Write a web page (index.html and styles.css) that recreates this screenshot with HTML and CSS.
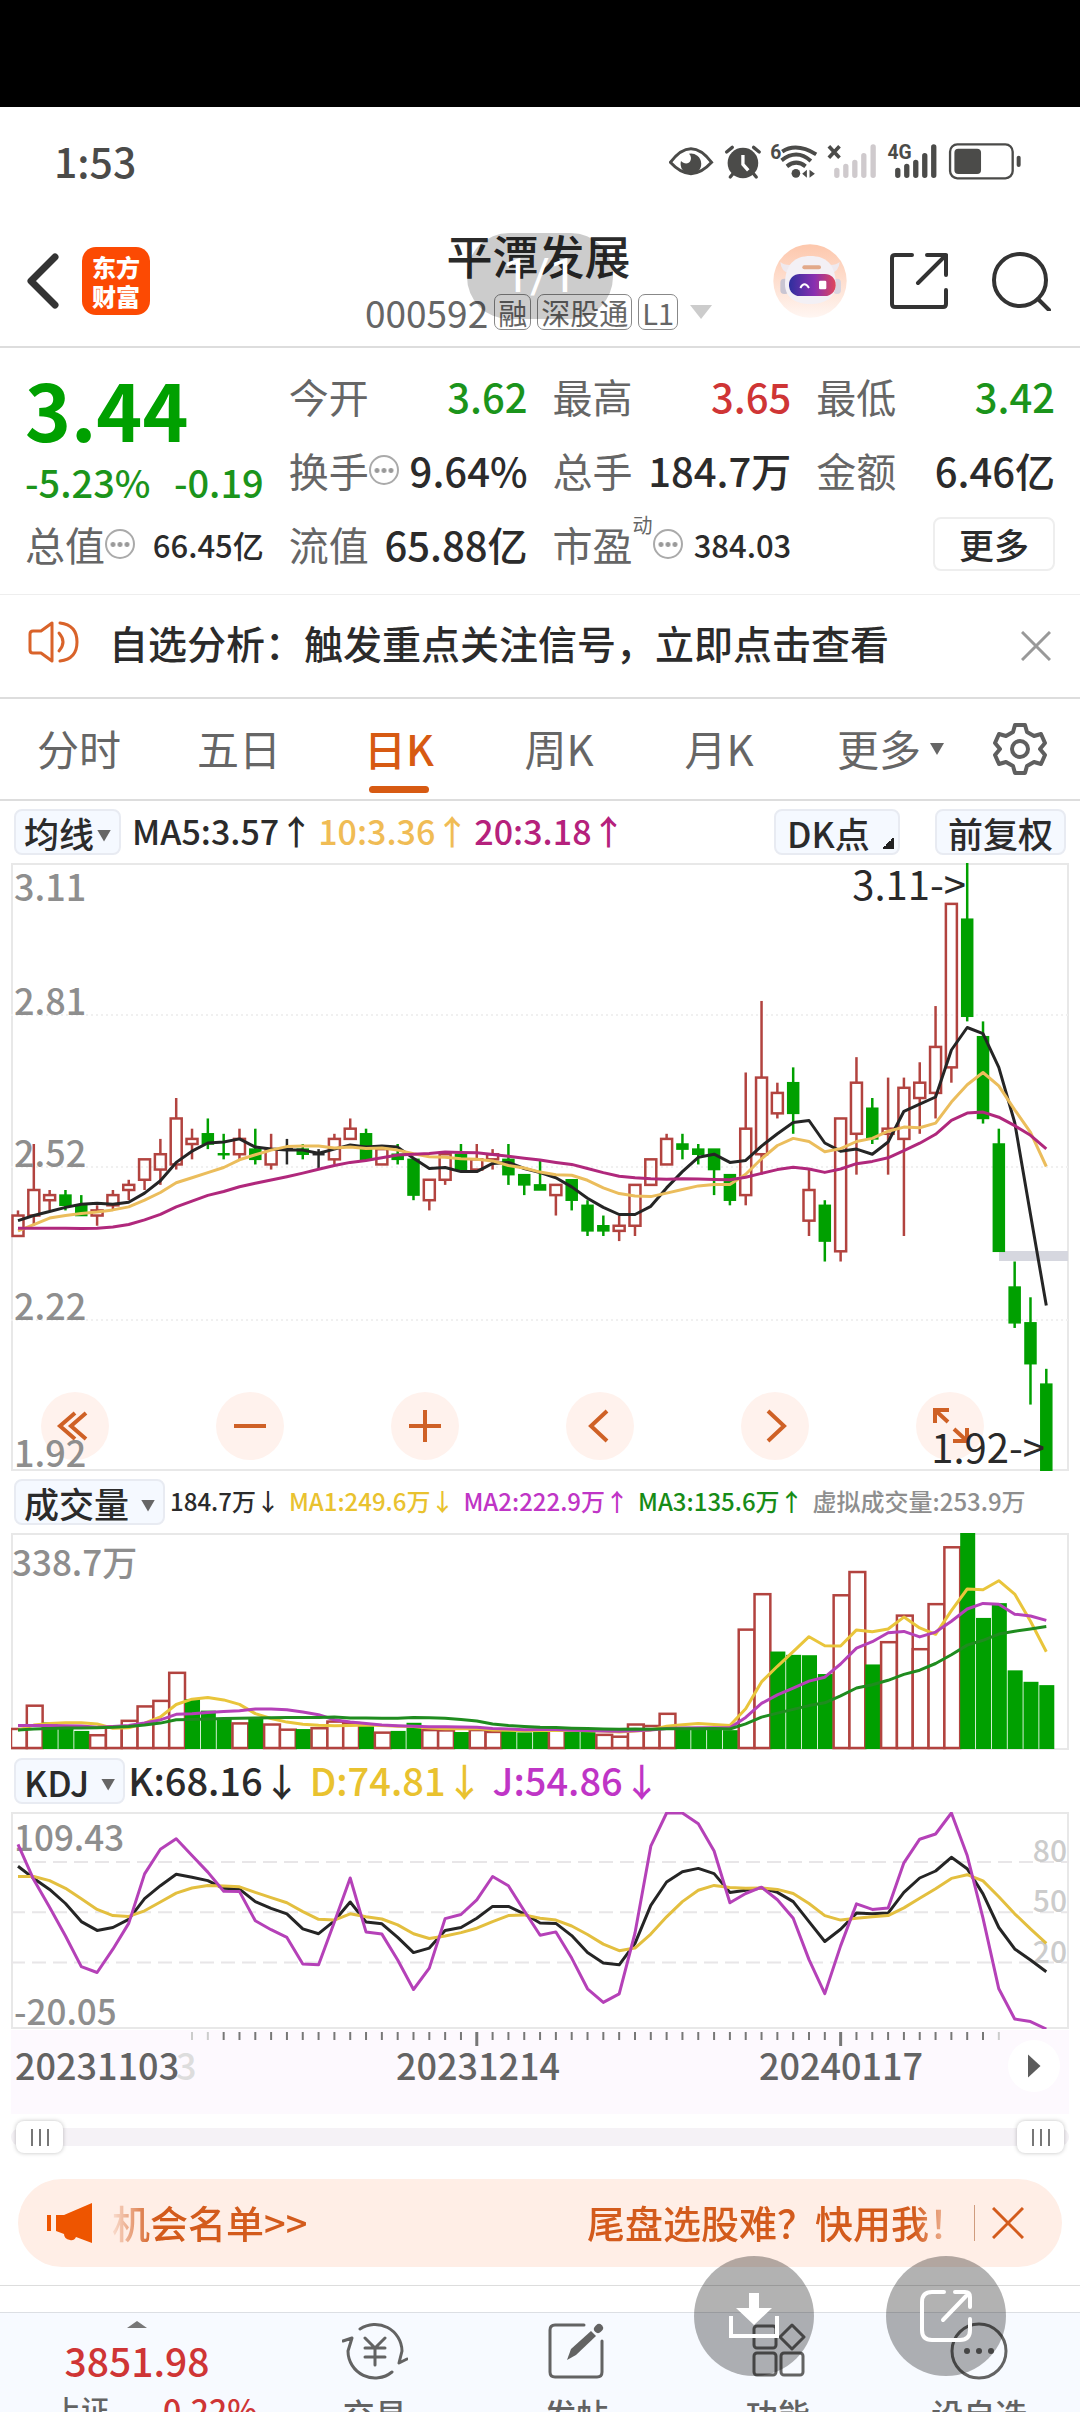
FILE: index.html
```html
<!DOCTYPE html>
<html lang="zh-CN">
<head>
<meta charset="utf-8">
<meta name="viewport" content="width=device-width">
<title>平潭发展 000592</title>
<link rel="stylesheet" href="styles.css">
</head>
<body>
<div class="screen">
  <div class="cutout"></div>

  <div class="status">
    <span>1:53</span>
    <svg class="status-icons" viewBox="0 0 1060 120" fill="none">
      <path d="M4 64Q66-18 128 64Q66 132 4 64Z" stroke="#4b4b49" stroke-width="9"/>
      <path d="M60 38a31 31 0 1 1-24 22c8 10 24 10 28 0 4-8 2-16-4-22z" fill="#4b4b49"/>
      <g stroke="#4b4b49" stroke-width="10" stroke-linecap="round">
        <path d="M173 33l17-14M271 33l-17-14M184 108l10-12M262 108l-10-12"/>
      </g>
      <circle cx="222" cy="66" r="46" fill="#4b4b49"/>
      <path d="M222 42v28l16 18" stroke="#fff" stroke-width="10"/>
      <text x="304" y="54" class="status-net">6</text>
      <g stroke="#4b4b49" stroke-width="12">
        <path d="M340 32q42-28 102 8M338 58q46-36 88 2M354 76q28-22 56 0"/>
      </g>
      <circle cx="381" cy="97" r="13" fill="#4b4b49"/>
      <path d="M400 98l14-12v24zM422 86l16 12-16 12z" fill="#4b4b49"/>
      <path d="M480 16l32 34M512 16l-32 34" stroke="#4b4b49" stroke-width="11"/>
      <g stroke="#cfcacd" stroke-width="16" stroke-linecap="round">
        <path d="M504 88v15M531 76v27M558 64v39M585 44v59M613 18v85"/>
      </g>
      <g stroke="#4b4b49" stroke-width="16" stroke-linecap="round">
        <path d="M687 88v15M714 76v27M741 64v39M768 44v59M795 18v85"/>
      </g>
      <text x="656" y="54" class="status-net status-halo">4G</text>
      <rect x="844" y="10" width="188" height="102" rx="22" stroke="#4b4b49" stroke-width="7"/>
      <rect x="857" y="23" width="80" height="76" rx="12" fill="#4b4b49"/>
      <rect x="1044" y="44" width="12" height="34" rx="6" fill="#4b4b49"/>
    </svg>
  </div>

  <header class="header">
    <button class="icon-btn back" aria-label="返回">
      <svg width="34" height="60" viewBox="0 0 34 60" fill="none" stroke="#333" stroke-width="7" stroke-linecap="round" stroke-linejoin="round"><path d="M29 6L5 30l24 24"/></svg>
    </button>
    <a class="logo" href="#home">东方<br>财富</a>
    <div class="heading">
      <h1>平潭发展</h1>
      <div class="code">
        <span>000592</span><span class="tag">融</span><span class="tag">深股通</span><span class="tag">L1</span><i class="tri tri-lg"></i>
      </div>
    </div>
    <div class="actions">
      <button class="icon-btn" aria-label="智能助手">
        <svg width="74" height="74" viewBox="0 0 222 222">
          <defs>
            <linearGradient id="halo" x1="0" y1="0" x2="0" y2="1"><stop offset="0" stop-color="#fdc7ac"/><stop offset="1" stop-color="#fff6f2"/></linearGradient>
            <linearGradient id="visor" x1="0" y1="0" x2="1" y2="0"><stop offset="0" stop-color="#2e2f9e"/><stop offset=".55" stop-color="#8a2fb0"/><stop offset="1" stop-color="#e0475a"/></linearGradient>
          </defs>
          <circle cx="111" cy="111" r="110" fill="url(#halo)"/>
          <path d="M22 54q2 30 28 34l20-28q-32 8-48-6zM200 54q-2 30-28 34l-20-28q32 8 48-6z" fill="#efe9ee"/>
          <rect x="22" y="104" width="26" height="46" rx="12" fill="#c9c5d2"/>
          <rect x="180" y="104" width="24" height="46" rx="12" fill="#d9d5df"/>
          <path d="M36 120c0-60 30-84 76-84s76 24 76 84c0 44-36 60-76 60s-76-16-76-60z" fill="#f3f0f5"/>
          <rect x="88" y="64" width="56" height="12" rx="6" fill="#e2a98a"/>
          <rect x="48" y="90" width="140" height="66" rx="32" fill="url(#visor)"/>
          <path d="M82 132q12-22 26 0" stroke="#fff" stroke-width="6" fill="none"/>
          <rect x="138" y="110" width="22" height="26" rx="4" fill="#fff"/>
        </svg>
      </button>
      <button class="icon-btn" aria-label="分享">
        <svg width="60" height="60" viewBox="0 0 60 60" fill="none" stroke="#333" stroke-width="4" stroke-linecap="round" stroke-linejoin="round"><path d="M23 4H6Q3 4 3 7v46q0 3 3 3h48q3 0 3-3V39M38 4h19v20M57 4L29 32"/></svg>
      </button>
      <button class="icon-btn" aria-label="搜索">
        <svg width="60" height="60" viewBox="0 0 60 60" fill="none" stroke="#333" stroke-width="4" stroke-linecap="round"><circle cx="29" cy="29" r="26"/><path d="M47 48l11 11"/></svg>
      </button>
    </div>
    <div class="pager">1/1</div>
  </header>

  <section class="quote">
    <div class="last">
      <strong>3.44</strong>
      <p><span>-5.23%</span><span>-0.19</span></p>
    </div>
    <div class="cell"><span>今开</span><b class="down">3.62</b></div>
    <div class="cell"><span>最高</span><b class="up">3.65</b></div>
    <div class="cell"><span>最低</span><b class="down">3.42</b></div>
    <div class="cell"><span>换手<i class="more-dot"></i></span><b>9.64%</b></div>
    <div class="cell"><span>总手</span><b>184.7万</b></div>
    <div class="cell"><span>金额</span><b>6.46亿</b></div>
    <div class="cell"><span>总值<i class="more-dot"></i></span><b class="small">66.45亿</b></div>
    <div class="cell"><span>流值</span><b>65.88亿</b></div>
    <div class="cell"><span>市盈<sup>动</sup><i class="more-dot"></i></span><b class="small">384.03</b></div>
    <div class="cell cell-end"><button class="more">更多</button></div>
  </section>

  <section class="notice">
    <svg width="54" height="44" viewBox="0 0 54 44" fill="none" stroke="#d9632a" stroke-width="3" stroke-linejoin="round" stroke-linecap="round"><path d="M25 3v38L14 33H6q-3 0-3-3V14q0-3 3-3h8zM32 13q8 9 0 18M33 3q17 2 17 19T33 41"/></svg>
    <a href="#signal">自选分析：触发重点关注信号，立即点击查看</a>
    <button class="icon-btn" aria-label="关闭提示">
      <svg width="30" height="30" viewBox="0 0 30 30" stroke="#999" stroke-width="3"><path d="M1 1l28 28M29 1L1 29"/></svg>
    </button>
  </section>

  <nav class="tabs">
    <button>分时</button>
    <button>五日</button>
    <button class="active">日K</button>
    <button>周K</button>
    <button>月K</button>
    <button>更多<i class="tri"></i></button>
    <button class="gear" aria-label="设置">
      <svg width="54" height="54" viewBox="0 0 54 54" fill="none" stroke="#5f5f5f" stroke-width="4" stroke-linejoin="round"><path d="M22 3h10l2 7 7 4 7-2 4 9-5 6 5 6-4 9-7-2-7 4-2 7H22l-2-7-7-4-7 2-4-9 5-6-5-6 4-9 7 2 7-4z"/><circle cx="27" cy="27" r="8"/></svg>
    </button>
  </nav>

  <div class="toolbar">
    <button class="chip">均线<i class="tri"></i></button>
    <p class="legend"><span>MA5:3.57↑</span><span class="amber">10:3.36↑</span><span class="magenta">20:3.18↑</span></p>
    <button class="chip chip-corner">DK点</button>
    <button class="chip chip-last">前复权</button>
  </div>

  <div class="panel">
    <svg class="plot" id="kline" viewBox="0 0 1058 608" role="img" aria-label="日K线图"></svg>
    <div class="controls">
      <button aria-label="最早"><svg viewBox="0 0 34 34"><path d="M17 4L2 17l15 13M28 4L13 17l15 13"/></svg></button>
      <button aria-label="缩小"><svg viewBox="0 0 34 34"><path d="M1 17h32"/></svg></button>
      <button aria-label="放大"><svg viewBox="0 0 34 34"><path d="M1 17h32M17 1v32"/></svg></button>
      <button aria-label="左移"><svg viewBox="0 0 34 34"><path d="M24 2L8 17l16 15"/></svg></button>
      <button aria-label="右移"><svg viewBox="0 0 34 34"><path d="M10 2l16 15-16 15"/></svg></button>
      <button aria-label="全屏"><svg viewBox="0 0 34 34"><path d="M2 14V1h14M2 1l13 12M34 19v13H20M34 32L21 20"/></svg></button>
    </div>
    <svg class="plot plot-over" id="kline-text" viewBox="0 0 1058 608" aria-hidden="true"></svg>
  </div>

  <div class="toolbar">
    <button class="chip">成交量<i class="tri"></i></button>
    <p class="legend compact"><span>184.7万↓</span><span class="gold">MA1:249.6万↓</span><span class="purple">MA2:222.9万↑</span><span class="green">MA3:135.6万↑</span><span class="grey">虚拟成交量:253.9万</span></p>
  </div>
  <div class="panel"><svg class="plot" id="volume" viewBox="0 0 1058 217" role="img" aria-label="成交量"></svg></div>

  <div class="toolbar">
    <button class="chip">KDJ<i class="tri"></i></button>
    <p class="legend wide"><span>K:68.16↓</span><span class="gold">D:74.81↓</span><span class="purple">J:54.86↓</span></p>
  </div>
  <div class="panel"><svg class="plot" id="kdj" viewBox="0 0 1058 217" role="img" aria-label="KDJ指标"></svg></div>

  <div class="axis">
    <svg class="plot" id="dates" viewBox="0 0 1058 84" role="img" aria-label="日期轴"></svg>
    <button class="play" aria-label="播放"></button>
  </div>

  <div class="range">
    <input type="range" min="0" max="100" value="0" aria-label="起始日期">
    <input type="range" min="0" max="100" value="100" aria-label="结束日期">
  </div>

  <aside class="banner">
    <svg width="46" height="42" viewBox="0 0 46 42" fill="#ee5500"><path d="M0 13h4v16H0zM9 13h8L45 1v40l-16-6q-2 4-6 3-6-1-6-6l-8-3z"/></svg>
    <div class="ticker"><a href="#list">机会名单&gt;&gt;</a><a class="ticker-end" href="#pick">尾盘选股难？快用我！</a></div>
    <i class="rule"></i>
    <button class="icon-btn" aria-label="关闭">
      <svg width="32" height="32" viewBox="0 0 32 32" stroke="#d35b1c" stroke-width="3"><path d="M1 1l30 30M31 1L1 31"/></svg>
    </button>
  </aside>

  <footer class="dock">
    <a class="index" href="#index">
      <i class="caret"></i>
      <strong>3851.98</strong>
      <span><small>上证</small>0.22%</span>
    </a>
    <a href="#trade">
      <svg width="66" height="60" viewBox="0 0 66 60" fill="none" stroke="#636363" stroke-width="3" stroke-linecap="round" stroke-linejoin="round"><path d="M18 8A27 27 0 0 1 60 30l-3 12 8-4M1 20l9-3-4 13a27 27 0 0 0 44 21M23 17l10 10 10-10M33 27v17M23 27h20M23 36h20"/></svg>
      <span>交易</span>
    </a>
    <a href="#post">
      <svg width="56" height="60" viewBox="0 0 56 60" fill="none" stroke="#636363" stroke-width="3" stroke-linecap="round"><path d="M36 4H7Q2 4 2 9v42q0 5 5 5h42q5 0 5-5V20"/><path d="M19 39l4-11 20-18 5 5-20 19z" fill="#636363" stroke="none"/><path d="M50 8l1-1" stroke-width="8"/></svg>
      <span>发帖</span>
    </a>
    <a href="#tools">
      <svg width="56" height="60" viewBox="0 0 56 60" fill="none" stroke="#636363" stroke-width="3" stroke-linejoin="round"><rect x="4" y="5" width="22" height="22" rx="3"/><rect x="4" y="32" width="22" height="22" rx="3"/><rect x="31" y="32" width="22" height="22" rx="3"/><path d="M42 4l12 12-12 12-12-12z"/></svg>
      <span>功能</span>
    </a>
    <a href="#watch">
      <svg width="60" height="60" viewBox="0 0 60 60" fill="none" stroke="#636363" stroke-width="3"><circle cx="30" cy="30" r="27"/><g fill="#636363" stroke="none"><circle cx="18" cy="30" r="3"/><circle cx="30" cy="30" r="3"/><circle cx="42" cy="30" r="3"/></g></svg>
      <span>设自选</span>
    </a>
  </footer>

  <div class="floating">
    <button aria-label="下载">
      <svg width="50" height="46" viewBox="0 0 50 46"><path d="M20 0h10v15h13L25 32 7 15h13z" fill="#fff"/><path d="M2 23v20h46V23" fill="none" stroke="#fff" stroke-width="4"/></svg>
    </button>
    <button aria-label="转发">
      <svg width="52" height="52" viewBox="0 0 52 52" fill="none" stroke="#fff" stroke-width="4" stroke-linecap="round" stroke-linejoin="round"><path d="M24 2H12Q2 2 2 12v28q0 10 10 10h28q10 0 10-10V29M35 2h10q5 0 5 5v10M48 4L23 30"/></svg>
    </button>
  </div>
</div>
<script src="chart.js"></script>
</body>
</html>
```
FILE: styles.css
```css
* { box-sizing: border-box; }
body {
  margin: 0;
  background: #fff;
  color: #2b2b2b;
  font-family: "Noto Sans CJK SC", "Noto Sans", sans-serif;
  font-weight: 400;
}
button, input { font: inherit; color: inherit; margin: 0; }
button { background: none; border: 0; padding: 0; }
a { color: inherit; text-decoration: none; }
svg { display: block; }
h1, p { margin: 0; font-weight: inherit; }
.screen { position: relative; height: 100vh; overflow: hidden; }
.cutout { height: 107px; background: #000; }

.status {
  display: flex;
  align-items: center;
  justify-content: space-between;
  height: 108px;
  padding: 0 58px 0 54px;
  color: #4b4b49;
  font-size: 41px;
  font-weight: 500;
}
.status span { padding-bottom: 3px; }
.status-icons { width: 353px; height: 40px; }
.status-net { font: 700 58px Roboto, sans-serif; fill: #4b4b49; }
.status-halo { stroke: #fff; stroke-width: 8px; paint-order: stroke; }

.header {
  position: relative;
  display: grid;
  grid-template-columns: 56px 68px 1fr auto;
  align-items: center;
  height: 133px;
  padding: 0 29px 0 26px;
  border-bottom: 2px solid #ddd;
}
.icon-btn { display: grid; place-items: center; }
.back { justify-content: start; }
.logo {
  display: grid;
  place-content: center;
  height: 68px;
  border-radius: 14px;
  background: #fc4a03;
  color: #fff;
  font-size: 24px;
  font-weight: 900;
  line-height: 29px;
}
.heading {
  position: absolute;
  inset: 0;
  display: flex;
  flex-direction: column;
  align-items: center;
  padding: 10px 3px 0 0;
  pointer-events: none;
}
.heading h1 { font-size: 46px; line-height: 58px; font-weight: 500; }
.code {
  display: flex;
  align-items: center;
  gap: 6px;
  color: #666;
  font-size: 37px;
  line-height: 58px;
}
.tag {
  padding: 0 3px;
  border: 1px solid #888;
  border-radius: 7px;
  font-size: 29px;
  line-height: 34px;
}
.actions { grid-column: 4; display: flex; align-items: center; gap: 42px; }
.pager {
  position: absolute;
  top: 18px;
  left: 50%;
  width: 146px;
  margin-left: -73px;
  border-radius: 42px;
  background: rgba(0, 0, 0, .2);
  color: #fff;
  font: 48px/86px Roboto, sans-serif;
  text-align: center;
}
.tri {
  display: inline-block;
  width: 14px;
  height: 12px;
  background: #666;
  clip-path: polygon(0 0, 100% 0, 50% 100%);
}
.tri-lg { width: 22px; height: 14px; margin-left: 6px; background: #ccc; }

.quote {
  display: grid;
  grid-template-columns: repeat(4, 1fr);
  grid-auto-rows: 74px;
  column-gap: 25px;
  padding: 11px 25px 13px;
  border-bottom: 1px solid #eee;
}
.last { grid-row: span 2; color: #00a000; }
.last strong { display: block; font-size: 78px; line-height: 98px; font-weight: 700; }
.last p { display: flex; justify-content: space-between; font-size: 38px; line-height: 50px; font-weight: 500; color: #1b941b; }
.cell {
  display: flex;
  align-items: center;
  justify-content: space-between;
  font-size: 40px;
  white-space: nowrap;
}
.cell span { position: relative; display: flex; align-items: center; color: #666; }
.cell b { font-weight: 500; }
.cell .small { font-size: 31px; }
.cell sup { align-self: flex-start; font-size: 20px; line-height: 20px; }
.up { color: #cf3535; }
.down { color: #1b941b; }
.more-dot {
  width: 30px;
  height: 30px;
  border: 2px solid #aaa;
  border-radius: 50%;
  background: radial-gradient(circle, #999 2px, transparent 3px) center / 7px 7px repeat-x;
  background-clip: content-box;
  padding: 0 3px;
}
.cell-end { justify-content: flex-end; }
.more {
  width: 122px;
  height: 54px;
  border: 2px solid #eee;
  border-radius: 8px;
  font-size: 35px;
  line-height: 48px;
  font-weight: 500;
}

.notice {
  display: flex;
  align-items: center;
  height: 104px;
  padding: 0 29px 0 27px;
  border-bottom: 2px solid #ddd;
  font-size: 39px;
  font-weight: 500;
}
.notice > svg, .notice a { margin-bottom: 8px; }
.notice a { flex: 1; padding-left: 28px; white-space: nowrap; }

.tabs {
  display: grid;
  grid-template-columns: repeat(6, 4fr) 3fr;
  height: 102px;
  border-bottom: 2px solid #ddd;
  color: #666;
  font-size: 42px;
}
.tabs button { position: relative; padding: 0 2px 4px 0; }
.tabs .active { color: #d75a12; font-weight: 500; }
.tabs .active::after {
  content: "";
  position: absolute;
  left: 50%;
  bottom: 6px;
  width: 60px;
  height: 7px;
  margin-left: -31px;
  border-radius: 4px;
  background: #d75a12;
}
.tabs .tri { position: absolute; right: 16px; top: 44px; }
.tabs .gear { display: grid; place-items: center; padding: 0; }

.toolbar {
  display: flex;
  align-items: center;
  height: 62px;
  padding: 0 14px;
  font-size: 34px;
}
.chip {
  height: 46px;
  padding: 0 8px;
  border: 2px solid #e8ebf2;
  border-radius: 8px;
  background: #f5f9ff;
  font-size: 35px;
  line-height: 39px;
  font-weight: 500;
  white-space: nowrap;
}
.chip .tri { margin-left: 3px; vertical-align: 6px; }
.toolbar .chip:first-child:not(:nth-last-child(4)) .tri { margin-left: 12px; }
.legend { display: flex; flex: 1; gap: 5px; padding: 0 0 3px 11px; font-weight: 500; white-space: nowrap; }
.chip-corner {
  width: 126px;
  padding: 0 11px;
  text-align: left;
  background: linear-gradient(135deg, transparent 50%, #222 50%) right 4px bottom 4px / 12px 12px no-repeat, #f5f9ff;
}
.chip-last { width: 131px; margin-left: 35px; }
.compact { gap: 9px; padding-left: 5px; font-size: 24px; }
.wide { gap: 9px; padding-left: 3px; font-size: 38px; }
.amber { color: #f0bc55; }
.gold { color: #e9c22f; }
.magenta { color: #b5217c; }
.purple { color: #bf35c6; }
.green { color: #178c17; }
.grey { color: #8e8e8e; }

.panel { position: relative; margin: 0 11px; }
.plot { width: 100%; height: auto; }
.plot-over { position: absolute; inset: 0; pointer-events: none; }
.plot text { font-size: 40px; fill: #2a2a2a; }
.plot .scale { font-size: 36px; fill: #8e8e8e; font-weight: 500; }
.plot .sub { font-size: 35px; }
.plot .level { font-size: 30px; fill: #ccc; font-weight: 500; }
.plot .date { font-size: 36px; fill: #636363; font-weight: 500; }
.plot .faded { fill: #ddd; }
.controls {
  position: absolute;
  left: 30px;
  right: 85px;
  bottom: 11px;
  display: flex;
  justify-content: space-between;
}
.controls button {
  display: grid;
  place-items: center;
  width: 68px;
  height: 68px;
  border-radius: 50%;
  background: #fff2ed;
}
.controls svg { width: 34px; height: 34px; fill: none; stroke: #cf6126; stroke-width: 4; overflow: visible; }

.axis { position: relative; margin: 1px 11px 0; background: #fdf9fe; }
.play {
  position: absolute;
  right: 9px;
  top: 10px;
  width: 52px;
  height: 52px;
  border-radius: 50%;
  background: #fff;
}
.play::after {
  content: "";
  display: block;
  width: 13px;
  height: 24px;
  margin: 0 auto;
  background: #5c5c5c;
  clip-path: polygon(0 0, 100% 50%, 0 100%);
}

.range {
  position: relative;
  height: 18px;
  margin: 14px 11px 0;
  border-radius: 9px;
  background: #f5f2f6;
}
.range input {
  position: absolute;
  left: 5px;
  top: -7px;
  width: calc(100% - 10px);
  height: 32px;
  background: none;
  appearance: none;
  pointer-events: none;
}
.range input::-webkit-slider-thumb {
  appearance: none;
  width: 47px;
  height: 32px;
  border-radius: 8px;
  background: repeating-linear-gradient(90deg, #777 0 2px, transparent 2px 8px) center / 18px 17px no-repeat, #fff;
  box-shadow: 0 0 4px rgba(0, 0, 0, .25);
  pointer-events: auto;
}

.banner {
  display: flex;
  align-items: center;
  height: 88px;
  margin: 33px 18px 0;
  padding: 0 38px 0 29px;
  border-radius: 44px;
  background: #ffeee6;
  color: #d35b1c;
  font-size: 38px;
  font-weight: 500;
}
.ticker {
  display: flex;
  flex: 1;
  min-width: 0;
  margin: 0 24px 0 14px;
  padding: 0 0 4px 5px;
  overflow: hidden;
  white-space: nowrap;
  mask-image: linear-gradient(90deg, transparent, #000 48px, #000 calc(100% - 36px), transparent calc(100% + 16px));
}
.ticker-end { margin-left: auto; margin-right: -17px; }
.rule { width: 1px; height: 36px; margin-right: 17px; background: #cf9c7e; }

.dock {
  display: grid;
  grid-template-columns: 274px repeat(4, 1fr);
  height: 140px;
  margin-top: 19px;
  border-top: 26px solid #fff;
  background: #f7faff;
  box-shadow: 0 -1px #ddd, inset 0 1px #dcdfe4;
  color: #636363;
  font-size: 32px;
}
.dock a { display: flex; flex-direction: column; align-items: center; padding-top: 9px; }
.dock a > span { margin-top: 8px; line-height: 48px; font-weight: 500; }
.dock .index { color: #cf3535; }
.caret { width: 20px; height: 7px; background: #777; clip-path: polygon(50% 0, 100% 100%, 0 100%); }
.index strong { margin-top: 8px; font-size: 39px; line-height: 48px; font-weight: 500; }
.dock .index span { display: flex; gap: 54px; align-self: flex-start; margin: 1px 0 0 53px; }
.index small { font-size: 28px; color: #636363; }

.floating { position: absolute; right: 74px; bottom: 36px; display: flex; gap: 72px; }
.floating button {
  display: grid;
  place-items: center;
  width: 120px;
  height: 120px;
  border-radius: 50%;
  background: rgba(0, 0, 0, .3);
}
```
FILE: chart.js
```js
const NS = "http://www.w3.org/2000/svg";
const STEP = 15.82;
const FIRST = 7;
const RED = "#b2433f";
const GREEN = "#00a000";

// Daily candles in cents: [high, body top, body bottom, low, colour]
const candles = [
  [243,242,238,238,"r"],[256,247,242,240,"r"],[247,246,245,243,"r"],[247,246,244,243,"g"],[246,244,242,242,"g"],
  [244,243,242,240,"r"],[247,246,244,243,"r"],[249,248,247,245,"r"],[253,253,249,247,"r"],[257,254,251,248,"r"],
  [265,261,252,251,"r"],[259,257,256,253,"r"],[261,258,256,255,"g"],[258,254,254,253,"g"],[259,257,254,253,"r"],
  [259,255,253,252,"g"],[258,255,252,251,"r"],[257,255,255,252,"k"],[256,255,254,253,"g"],[255,254,254,251,"k"],
  [258,257,253,252,"r"],[261,259,257,257,"r"],[259,258,253,253,"g"],[255,255,252,252,"r"],[256,254,253,252,"g"],
  [253,253,246,245,"g"],[249,249,245,243,"r"],[254,254,249,248,"r"],[256,254,251,251,"g"],[256,253,251,251,"r"],
  [255,254,253,251,"r"],[256,253,250,248,"g"],[250,250,248,246,"g"],[253,248,247,247,"g"],[248,248,246,242,"r"],
  [249,249,245,243,"g"],[245,244,239,238,"g"],[242,240,239,238,"g"],[242,240,239,237,"r"],[248,248,240,238,"r"],
  [253,253,248,248,"r"],[258,257,252,252,"r"],[258,256,255,253,"g"],[256,255,254,252,"g"],[255,255,251,246,"g"],
  [250,250,245,244,"g"],[270,259,246,244,"r"],[284,269,254,250,"r"],[268,266,262,261,"r"],[271,268,262,258,"g"],
  [251,247,241,238,"r"],[245,244,237,233,"g"],[261,261,235,233,"r"],[273,268,258,250,"r"],[265,263,257,256,"g"],
  [269,259,258,250,"r"],[269,267,257,238,"r"],[272,268,265,258,"r"],[283,275,266,261,"r"],[303,303,271,268,"r"],
  [311,300,281,280,"g"],[280,277,261,260,"g"],[259,256,235,235,"g"],[233,228,221,220,"g"],[226,221,213,205,"g"],
  [212,209,192,192,"g"]
];
const earlierCloses = [247,246,244,243,242,241,238,235,232,232,235,233,239,238,240,242,242,240,239];

// Volume, where 585 equals the 338.7万 axis top
const volumes = [
  57,120,72,57,49,40,64,79,118,133,209,135,104,84,72,84,69,55,54,59,77,73,63,47,49,71,54,53,46,54,49,53,45,
  51,53,51,48,41,36,69,65,98,60,52,57,51,326,422,264,255,254,203,419,482,229,292,364,273,395,549,585,355,
  395,213,182,173
];
const earlierVolumes = [70,43,35,35,33,40,36,36,31,31,120,72,66,57,72,49,49,49,49];

// Indicator lines, measured down from the panel's top edge at 925 to its bottom at 1510
const K = [1069,1102,1132,1170,1219,1243,1235,1213,1157,1122,1091,1099,1108,1129,1131,1165,1183,1198,1239,1252,1217,1166,1220,1225,1262,1303,1291,1243,1235,1210,1178,1178,1198,1223,1224,1257,1303,1331,1336,1278,1175,1112,1084,1075,1089,1140,1134,1128,1140,1165,1219,1273,1240,1196,1198,1196,1140,1101,1082,1045,1076,1144,1235,1293,1323,1355];
const D = [1097,1097,1108,1129,1157,1186,1203,1205,1190,1166,1142,1128,1121,1123,1125,1140,1154,1168,1192,1213,1215,1198,1206,1212,1228,1252,1265,1258,1249,1237,1219,1203,1201,1210,1215,1231,1254,1280,1298,1291,1253,1206,1165,1134,1121,1127,1129,1128,1132,1143,1170,1203,1215,1210,1206,1203,1182,1156,1130,1102,1092,1109,1152,1198,1239,1278];
const J = [1010,1106,1180,1258,1341,1357,1294,1224,1090,1023,995,1040,1085,1137,1138,1217,1241,1262,1334,1336,1220,1101,1247,1253,1323,1403,1345,1211,1200,1160,1097,1122,1190,1256,1247,1318,1401,1438,1415,1250,1015,925,925,954,1028,1168,1143,1126,1160,1210,1322,1414,1285,1171,1186,1182,1060,996,982,925,1040,1210,1401,1483,1490,1510];

function add(svg, name, attrs, text) {
  const el = document.createElementNS(NS, name);
  for (const key in attrs) el.setAttribute(key, attrs[key]);
  if (text) el.textContent = text;
  svg.appendChild(el);
}
const xAt = i => FIRST + i * STEP;
const frame = (svg, h) => add(svg, "rect", { x: 1, y: 1, width: 1056, height: h - 2, fill: "none", stroke: "#e8e8e8", "stroke-width": 2 });
const hline = (svg, y, dash, color) => add(svg, "line", { x1: 0, x2: 1058, y1: y, y2: y, stroke: color, "stroke-width": 2, "stroke-dasharray": dash });
const line = (svg, values, yAt, color) => add(svg, "polyline", {
  points: values.map((v, i) => xAt(i).toFixed(1) + "," + yAt(v).toFixed(1)).join(" "),
  fill: "none", stroke: color, "stroke-width": 3, "stroke-linejoin": "round"
});
function average(values, earlier, n) {
  const all = earlier.concat(values);
  return values.map((_, i) => {
    const end = i + earlier.length + 1;
    return all.slice(end - n, end).reduce((a, b) => a + b) / n;
  });
}
const closes = candles.map(c => c[4] === "g" ? c[2] : c[1]);

function drawPrice() {
  const svg = document.getElementById("kline");
  const y = cents => (311 - cents) * 608 / 119;
  frame(svg, 608);
  [152, 304, 457].forEach(v => hline(svg, v, "2 3", "#f0f0f0"));
  add(svg, "rect", { x: 988, y: 388, width: 69, height: 10, fill: "#d6d7df" });
  candles.forEach(([high, top, bottom, low, c], i) => {
    const x = xAt(i);
    const color = { r: RED, g: GREEN, k: "#2a2a2a" }[c];
    add(svg, "line", { x1: x, x2: x, y1: y(high), y2: y(top), stroke: color, "stroke-width": 2.5 });
    add(svg, "line", { x1: x, x2: x, y1: y(bottom), y2: y(low), stroke: color, "stroke-width": 2.5 });
    if (top === bottom) add(svg, "line", { x1: x - 6, x2: x + 6, y1: y(top), y2: y(top), stroke: color, "stroke-width": 2.5 });
    else add(svg, "rect", { x: x - 5.5, y: y(top), width: 11, height: y(bottom) - y(top), stroke: color, "stroke-width": c === "g" ? 1.5 : 2.5, fill: c === "g" ? color : "none" });
  });
  line(svg, average(closes, earlierCloses, 5), y, "#252525");
  line(svg, average(closes, earlierCloses, 10), y, "#ebbd5c");
  line(svg, average(closes, earlierCloses, 20), y, "#b0287c");
  const over = document.getElementById("kline-text");
  [["3.11", 38], ["2.81", 152], ["2.52", 304], ["2.22", 457], ["1.92", 604]].forEach(([t, v]) =>
    add(over, "text", { x: 3, y: v, class: "scale" }, t));
  add(over, "text", { x: 955, y: 37, "text-anchor": "end" }, "3.11->");
  add(over, "text", { x: 1034, y: 600, "text-anchor": "end" }, "1.92->");
}

function drawVolume() {
  const svg = document.getElementById("volume");
  const y = v => 216 - v * 216 / 585;
  frame(svg, 217);
  const green20 = average(volumes, earlierVolumes, 20);
  volumes.forEach((v, i) => {
    const falling = i > 0 && closes[i] < closes[i - 1];
    if (falling) add(svg, "rect", { x: xAt(i) - 7, y: y(v), width: 15, height: 216 - y(v), fill: GREEN });
    else add(svg, "rect", { x: xAt(i) - 7, y: y(v) + 1, width: 15.8, height: 214 - y(v), fill: "#fff", stroke: RED, "stroke-width": 2.5 });
  });
  line(svg, average(volumes, earlierVolumes, 5), y, "#e9c53b");
  line(svg, average(volumes, earlierVolumes, 10), y, "#b541b8");
  line(svg, green20, y, "#1f8c1f");
  add(svg, "text", { x: 1, y: 43, class: "scale sub" }, "338.7万");
}

function drawKdj() {
  const svg = document.getElementById("kdj");
  const y = v => (v - 925) * 216 / 585 + 1;
  frame(svg, 217);
  [["80", 1058], ["50", 1194], ["20", 1330]].forEach(([t, v]) => {
    hline(svg, y(v), "14 7", "#e8e6e8");
    add(svg, "text", { x: 1056, y: y(v), "text-anchor": "end", class: "level" }, t);
  });
  add(svg, "text", { x: 3, y: 39, class: "scale sub" }, "109.43");
  add(svg, "text", { x: 3, y: 213, class: "scale sub" }, "-20.05");
  line(svg, K, y, "#252525");
  line(svg, D, y, "#e3bf3f");
  line(svg, J, y, "#b541b8");
}

function drawDates() {
  const svg = document.getElementById("dates");
  for (let i = 11; i <= 62; i++) {
    const major = i === 29 || i === 52;
    const faint = i < 13 || i > 61;
    add(svg, "line", { x1: xAt(i), x2: xAt(i), y1: 2, y2: major ? 16 : 10, stroke: faint ? "#ccc" : "#777", "stroke-width": major ? 3 : 2 });
  }
  add(svg, "text", { x: 165, y: 50, class: "date faded" }, "3");
  add(svg, "text", { x: 4, y: 50, class: "date" }, "20231103");
  add(svg, "text", { x: 467, y: 50, "text-anchor": "middle", class: "date" }, "20231214");
  add(svg, "text", { x: 830, y: 50, "text-anchor": "middle", class: "date" }, "20240117");
}

drawPrice();
drawVolume();
drawKdj();
drawDates();
```
